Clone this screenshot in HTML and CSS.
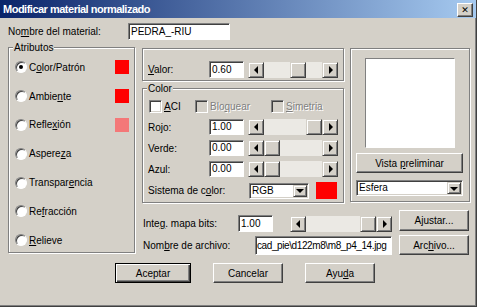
FILE: index.html
```html
<!DOCTYPE html>
<html>
<head>
  <title>Modificar material normalizado</title>
  <link rel="stylesheet" href="styles.css">
</head>
<body>
  <div class="window">
    <div class="titlebar">
      <span class="title">Modificar material normalizado</span>
      <span class="close-btn">&#x2715;</span>
    </div>

    <div class="client">
      <div class="name-row">
        <span class="name-label">No<u>m</u>bre del material:</span>
        <span class="field name-field">PEDRA_-RIU</span>
      </div>

      <div class="main">
        <fieldset class="group attrs">
          <legend>Atributos</legend>
          <div class="attr-row"><span class="radio checked"></span><span class="attr-text">C<u>o</u>lor/Patrón</span><span class="swatch red"></span></div>
          <div class="attr-row"><span class="radio"></span><span class="attr-text">Ambie<u>n</u>te</span><span class="swatch red"></span></div>
          <div class="attr-row"><span class="radio"></span><span class="attr-text">Refle<u>x</u>ión</span><span class="swatch pink"></span></div>
          <div class="attr-row"><span class="radio"></span><span class="attr-text">Aspere<u>z</u>a</span></div>
          <div class="attr-row"><span class="radio"></span><span class="attr-text">Transpar<u>e</u>ncia</span></div>
          <div class="attr-row"><span class="radio"></span><span class="attr-text">Re<u>f</u>racción</span></div>
          <div class="attr-row"><span class="radio"></span><span class="attr-text"><u>R</u>elieve</span></div>
        </fieldset>

        <div class="right-col">
          <div class="upper">
            <div class="mid">
              <div class="group valor-group">
                <div class="slider-row">
                  <span class="row-label"><u>V</u>alor:</span>
                  <span class="field num">0.60</span>
                  <div class="scroll">
                    <div class="arrow arrow-left"></div>
                    <div class="track"><div class="thumb" style="margin-left: 26px"></div></div>
                    <div class="arrow arrow-right"></div>
                  </div>
                </div>
              </div>

              <fieldset class="group color-group">
                <legend>Color</legend>
                <div class="check-row">
                  <span class="check-item aci"><span class="checkbox"></span><span><u>A</u>CI</span></span>
                  <span class="check-item bloq disabled"><span class="checkbox"></span><span>Blo<u>q</u>uear</span></span>
                  <span class="check-item disabled"><span class="checkbox"></span><span><u>S</u>imetria</span></span>
                </div>
                <div class="slider-row">
                  <span class="row-label">Rojo:</span>
                  <span class="field num">1.00</span>
                  <div class="scroll">
                    <div class="arrow arrow-left"></div>
                    <div class="track"><div class="thumb" style="margin-left: 42px"></div></div>
                    <div class="arrow arrow-right"></div>
                  </div>
                </div>
                <div class="slider-row">
                  <span class="row-label">Verde:</span>
                  <span class="field num">0.00</span>
                  <div class="scroll">
                    <div class="arrow arrow-left"></div>
                    <div class="track"><div class="thumb" style="margin-left: 0px"></div></div>
                    <div class="arrow arrow-right"></div>
                  </div>
                </div>
                <div class="slider-row">
                  <span class="row-label">Azul:</span>
                  <span class="field num">0.00</span>
                  <div class="scroll">
                    <div class="arrow arrow-left"></div>
                    <div class="track"><div class="thumb" style="margin-left: 0px"></div></div>
                    <div class="arrow arrow-right"></div>
                  </div>
                </div>
                <div class="system-row">
                  <span class="system-label">Sistema de c<u>o</u>lor:</span>
                  <div class="select rgb-select">
                    <span class="select-text">RGB</span>
                    <span class="select-btn"></span>
                  </div>
                  <span class="swatch big-swatch"></span>
                </div>
              </fieldset>
            </div>

            <div class="group preview-group">
              <div class="preview-box"></div>
              <span class="btn vista-btn"><span>Vista <u>p</u>reliminar</span></span>
              <div class="select shape-select">
                <span class="select-text">Esfera</span>
                <span class="select-btn"></span>
              </div>
            </div>
          </div>

          <div class="integ-row">
            <span class="integ-label">Inte<u>g</u>. mapa bits:</span>
            <span class="field num integ-field">1.00</span>
            <div class="scroll integ-scroll">
              <div class="arrow arrow-left"></div>
              <div class="track"><div class="thumb" style="margin-left: 54px"></div></div>
              <div class="arrow arrow-right"></div>
            </div>
            <span class="btn side-btn"><span>A<u>j</u>ustar...</span></span>
          </div>

          <div class="file-row">
            <span class="file-label">Nom<u>b</u>re de archivo:</span>
            <span class="field file-field">cad_pie\d122m8\m8_p4_14.jpg</span>
            <span class="btn side-btn file-btn"><span>Arc<u>h</u>ivo...</span></span>
          </div>
        </div>
      </div>

      <div class="buttons">
        <span class="btn default-btn"><span>Aceptar</span></span>
        <span class="btn dlg-btn"><span>Cancelar</span></span>
        <span class="btn dlg-btn"><span>Ayu<u>d</u>a</span></span>
      </div>
    </div>
  </div>
</body>
</html>
```

FILE: styles.css
```css
body {
  margin: 0;
  background-color: #d4d0c8;
  font-family: "Liberation Sans", Arial, sans-serif;
  font-size: 10px;
  color: #000;
}

u {
  text-decoration-thickness: 1px;
  text-underline-offset: 1px;
}

.window {
  width: 477px;
  height: 307px;
  box-sizing: border-box;
  background-color: #d4d0c8;
  border-right: 1px solid #404040;
  border-bottom: 1px solid #404040;
  box-shadow: inset -1px -1px #808080;
  overflow: hidden;
}

.titlebar {
  height: 18px;
  display: flex;
  align-items: center;
  justify-content: space-between;
  padding: 0 3px 0 3px;
  background: linear-gradient(to right, #0a246a, #a6caf0);
}

.title {
  color: #fff;
  font-weight: bold;
  font-size: 11px;
  letter-spacing: -0.5px;
}

.close-btn {
  width: 16px;
  height: 14px;
  margin-top: 2px;
  box-sizing: border-box;
  display: flex;
  align-items: center;
  justify-content: center;
  font-size: 9px;
  font-weight: bold;
  font-family: "DejaVu Sans", sans-serif;
  background-color: #d4d0c8;
  border: 1px solid;
  border-color: #fff #404040 #404040 #fff;
  box-shadow: inset -1px -1px #808080;
}

.client {
  padding: 5px 0 0 8px;
}

/* shared widgets */

.field {
  display: block;
  box-sizing: border-box;
  height: 17px;
  line-height: 15px;
  padding: 0 2px;
  background-color: #fff;
  border: 1px solid;
  border-color: #808080 #fff #fff #808080;
  box-shadow: inset 1px 1px #404040;
  white-space: nowrap;
  overflow: hidden;
}

.btn {
  display: flex;
  align-items: center;
  justify-content: center;
  box-sizing: border-box;
  background-color: #d4d0c8;
  border: 1px solid;
  border-color: #fff #404040 #404040 #fff;
  box-shadow: inset -1px -1px #808080;
  white-space: nowrap;
}

.group {
  margin: 0;
  box-sizing: border-box;
  min-width: 0;
  border: 1px solid #808080;
  box-shadow: inset 1px 1px #fff, 1px 1px #fff;
}

fieldset.group {
  padding: 0 5px;
}

legend {
  height: 11px;
  line-height: 11px;
  padding: 0 1px;
  margin-left: -1px;
  background-color: #d4d0c8;
}

.swatch {
  display: block;
  width: 14px;
  height: 14px;
}

.red {
  background-color: #ff0000;
}

.pink {
  background-color: #f47878;
}

.radio {
  position: relative;
  width: 12px;
  height: 12px;
  box-sizing: border-box;
  border-radius: 50%;
  background-color: #fff;
  border: 1px solid;
  border-color: #808080 #fff #fff #808080;
  box-shadow: inset 1px 1px #404040;
  flex-shrink: 0;
}

.radio.checked::after {
  content: "";
  position: absolute;
  left: 3px;
  top: 3px;
  width: 4px;
  height: 4px;
  border-radius: 50%;
  background-color: #000;
}

.checkbox {
  width: 13px;
  height: 13px;
  box-sizing: border-box;
  background-color: #fff;
  border: 1px solid;
  border-color: #808080 #fff #fff #808080;
  box-shadow: inset 1px 1px #404040, inset -1px -1px #d4d0c8;
  margin-right: 2px;
  flex-shrink: 0;
}

/* scrollbar: arrow | track | arrow */

.scroll {
  display: grid;
  grid-template-columns: 16px 58px 16px;
  height: 16px;
  width: 90px;
  margin-left: 4px;
  flex: none;
}

.integ-scroll {
  grid-template-columns: 16px 70px 16px;
  width: 102px;
}

.track {
  height: 16px;
  background-color: #ebe9e4;
}

.arrow,
.thumb {
  width: 16px;
  height: 16px;
  box-sizing: border-box;
  background-color: #d4d0c8;
  border: 1px solid;
  border-color: #d4d0c8 #404040 #404040 #d4d0c8;
  box-shadow: inset 1px 1px #fff, inset -1px -1px #808080;
}

.arrow {
  display: flex;
  align-items: center;
  justify-content: center;
}

.arrow::before {
  content: "";
  width: 0;
  height: 0;
  border-top: 4px solid transparent;
  border-bottom: 4px solid transparent;
}

.arrow-left::before {
  border-right: 4px solid #000;
  margin-left: -1px;
}

.arrow-right::before {
  border-left: 4px solid #000;
  margin-left: 1px;
}

.select {
  display: flex;
  box-sizing: border-box;
  height: 16px;
  padding: 1px;
  background-color: #fff;
  border: 1px solid;
  border-color: #808080 #fff #fff #808080;
  box-shadow: inset 1px 1px #404040, inset -1px -1px #d4d0c8;
}

.select-text {
  flex: 1;
  line-height: 12px;
  padding-left: 1px;
}

.select-btn {
  width: 14px;
  box-sizing: border-box;
  display: flex;
  align-items: center;
  justify-content: center;
  background-color: #d4d0c8;
  border: 1px solid;
  border-color: #d4d0c8 #404040 #404040 #d4d0c8;
  box-shadow: inset 1px 1px #fff, inset -1px -1px #808080;
}

.select-btn::before {
  content: "";
  width: 0;
  height: 0;
  border-left: 4px solid transparent;
  border-right: 4px solid transparent;
  border-top: 4px solid #000;
  margin-top: 1px;
}

/* name row */

.name-row {
  display: flex;
  align-items: center;
  height: 17px;
}

.name-label {
  width: 120px;
}

.name-field {
  width: 102px;
}

/* main area */

.main {
  display: flex;
  gap: 7px;
  margin-top: 2px;
}

.attrs {
  width: 127px;
  height: 211px;
}

.attr-row {
  display: flex;
  align-items: center;
  height: 28.8px;
  padding-left: 1px;
}

.attr-text {
  margin-left: 2px;
  flex: 1;
}

.right-col {
  width: 328px;
}

.upper {
  display: flex;
  gap: 6px;
}

.mid {
  width: 202px;
}

.valor-group {
  margin-top: 6px;
  height: 33px;
  padding: 12px 0 0 5px;
}

.slider-row {
  display: flex;
  align-items: center;
  height: 17px;
}

.row-label {
  width: 61px;
}

.num {
  width: 35px;
}

.color-group {
  margin-top: 2px;
  height: 120px;
}

.check-row {
  display: flex;
  align-items: center;
  height: 16px;
  margin-top: 4px;
  margin-bottom: 5px;
  padding-left: 1px;
}

.check-item {
  display: flex;
  align-items: center;
}

.aci {
  width: 46px;
}

.bloq {
  width: 76px;
}

.disabled {
  color: #808080;
  text-shadow: 1px 1px #fff;
}

.disabled .checkbox {
  background-color: #d4d0c8;
}

.color-group .slider-row {
  height: 16px;
  margin-bottom: 5px;
}

.color-group .field {
  height: 16px;
  line-height: 14px;
}

.system-row {
  display: flex;
  align-items: center;
  height: 17px;
}

.system-label {
  width: 101px;
}

.rgb-select {
  width: 60px;
}

.big-swatch {
  width: 21px;
  height: 17px;
  margin-left: 7px;
  background-color: #ff0000;
}

.preview-group {
  width: 120px;
  height: 154px;
  margin-top: 6px;
  padding: 9px 5px 0 5px;
}

.preview-box {
  width: 90px;
  height: 90px;
  margin-left: 9px;
  box-sizing: border-box;
  background-color: #fff;
  border: 1px solid;
  border-color: #808080 #fff #fff #808080;
}

.vista-btn {
  width: 107px;
  height: 20px;
  margin-top: 5px;
}

.shape-select {
  width: 107px;
  margin-top: 7px;
}

/* bottom rows */

.integ-row,
.file-row {
  display: flex;
  align-items: flex-start;
  padding-left: 1px;
}

.integ-row {
  height: 21px;
  margin-top: 7px;
}

.integ-label {
  width: 95px;
  line-height: 17px;
  margin-top: 5px;
  flex-shrink: 0;
}

.integ-field {
  margin-top: 5px;
  flex-shrink: 0;
}

.integ-row .integ-scroll {
  margin-left: 17px;
  margin-top: 6px;
}

.side-btn {
  width: 70px;
  height: 21px;
  margin-left: 7px;
  flex-shrink: 0;
}

.file-row {
  height: 20px;
  margin-top: 4px;
}

.file-label {
  width: 112px;
  line-height: 17px;
  margin-top: 2px;
  flex-shrink: 0;
}

.file-field {
  width: 137px;
  height: 19px;
  line-height: 17px;
  margin-top: 1px;
  padding: 0 1px;
  letter-spacing: -0.4px;
  flex-shrink: 0;
}

.file-btn {
  height: 20px;
}

/* dialog buttons */

.buttons {
  display: flex;
  gap: 22px;
  margin-top: 8px;
  padding-left: 107px;
}

.dlg-btn {
  width: 70px;
  height: 20px;
}

.default-btn {
  width: 76px;
  height: 20px;
  border: 1px solid #000;
  box-shadow: inset 1px 1px #fff, inset -1px -1px #404040, inset -2px -2px #808080;
}
```
